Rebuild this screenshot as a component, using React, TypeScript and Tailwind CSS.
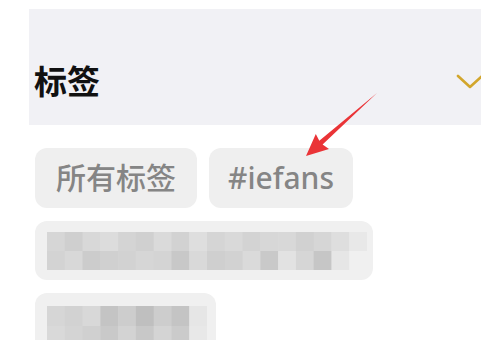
import React from "react";

const font = { fontFamily: '"Noto Sans", "Noto Sans CJK SC", sans-serif' };

const shades1 = [
  ["#d6d6d6", "#cfcfcf", "#d8d8d8", "#dcdcdc", "#d4d4d4", "#d0d0d0", "#dadada", "#d2d2d2", "#dedede", "#d5d5d5", "#d9d9d9", "#d3d3d3", "#d7d7d7", "#d8d8d8", "#d1d1d1", "#d6d6d6", "#dedede", "#e8e8e8"],
  ["#d3d3d3", "#d8d8d8", "#cccccc", "#d0d0d0", "#d2d2d2", "#d6d6d6", "#d4d4d4", "#c8c8c8", "#d9d9d9", "#cfcfcf", "#d2d2d2", "#dadada", "#c9c9c9", "#e2e2e2", "#d6d6d6", "#c6c6c6", "#e6e6e6", "#f0f0f0"],
];
const shades2 = [
  ["#d6d6d6", "#d2d2d2", "#d8d8d8", "#c4c4c4", "#cdcdcd", "#bfbfbf", "#cdcdcd", "#c4c4c4", "#e6e6e6"],
  ["#d9d9d9", "#d4d4d4", "#d0d0d0", "#c9c9c9", "#d3d3d3", "#c8c8c8", "#d4d4d4", "#cbcbcb", "#e8e8e8"],
];

function Mosaic({ rows, w, h }: { rows: string[][]; w: number; h: number }) {
  const cw = w / rows[0].length;
  const ch = h / rows.length;
  return (
    <svg width={w} height={h} className="block">
      {rows.map((r, i) =>
        r.map((c, j) => (
          <rect key={`${i}-${j}`} x={j * cw} y={i * ch} width={cw + 0.5} height={ch + 0.5} fill={c} />
        ))
      )}
    </svg>
  );
}

export default function App() {
  return (
    <div className="relative w-[481px] h-[340px] overflow-hidden bg-white" style={font}>
      <div className="pt-[9px] pl-[29px]">
        <div className="w-[470px] h-[116px] bg-[#f1f1f5] flex items-end pb-[27px] pl-[5px] pr-[15px]">
          <div className="flex-1 flex items-center justify-between">
            <span className="text-[33px] leading-[33px] font-bold text-[#111]">标签</span>
            <svg width="28" height="16" viewBox="0 0 28 16">
              <polyline points="2,2 14,13 26,2" fill="none" stroke="#d2a62c" strokeWidth="2.6" strokeLinecap="round" strokeLinejoin="round" />
            </svg>
          </div>
        </div>
      </div>

      <div className="pl-[35px] pt-[23px] flex flex-wrap gap-x-[12px] gap-y-[13px] w-[420px]">
        <div className="h-[60px] rounded-[12px] bg-[#efefef] px-[21px] flex items-center text-[30px] leading-[60px] text-[#858585] font-medium">
          所有标签
        </div>
        <div className="h-[60px] rounded-[12px] bg-[#efefef] px-[19px] flex items-center text-[30px] leading-[60px] text-[#858585] font-medium">
          #iefans
        </div>
        <div className="w-[338px] h-[59px] rounded-[12px] bg-[#f0f0f0] pl-[12px] pt-[11px]">
          <Mosaic rows={shades1} w={320} h={38} />
        </div>
        <div className="w-[181px] h-[60px] rounded-[12px] bg-[#f0f0f0] pl-[12px] pt-[13px]">
          <Mosaic rows={shades2} w={160} h={40} />
        </div>
      </div>

      <svg className="absolute left-0 top-0 pointer-events-none" width="481" height="340">
        <polygon
          points="306,156 315.8,134 319.3,140.8 377,93 322.6,144.6 329,149"
          fill="#ea3437"
        />
      </svg>
    </div>
  );
}
